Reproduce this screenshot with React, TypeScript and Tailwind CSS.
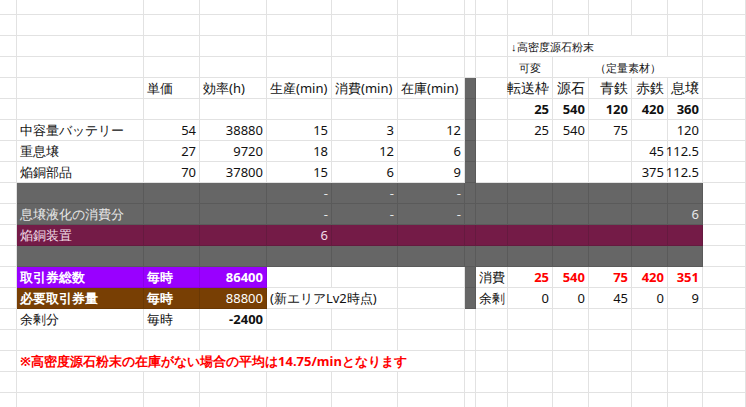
import React from "react";

const NCOL = 15;

type Cell = { c: number; span?: number; t?: string; cls?: string };
type Row = { h: string; bg?: { from: number; to: number; cls: string }; cells?: Cell[]; darkCol?: boolean };

const dark = "bg-[#666666] text-[#e8e8e8] border-[#5a5a5a]";
const maroon = "bg-[#741b47] text-[#f1dce6] border-[#651a3f]";
const R = "justify-end";
const H = `${R} text-[14px]`;
const RED = `${R} font-bold text-[#ff0000]`;

const spanCls: Record<number, string> = { 1: "col-span-1", 2: "col-span-2", 4: "col-span-4", 6: "col-span-6" };

const rows: Row[] = [
  { h: "h-[15px]" },
  { h: "h-[21px]" },
  { h: "h-[21px]", cells: [{ c: 9, span: 4, t: "↓高密度源石粉末", cls: "text-[11px]" }] },
  { h: "h-[21px]", cells: [{ c: 9, t: "可変", cls: "justify-center text-[11px]" }, { c: 10, span: 4, t: "（定量素材）", cls: "justify-center text-[11px]" }] },
  {
    h: "h-[21px]", darkCol: true, cells: [
      { c: 2, t: "単価" }, { c: 3, t: "効率(h)" }, { c: 4, t: "生産(min)" }, { c: 5, t: "消費(min)" }, { c: 6, t: "在庫(min)" },
      { c: 9, t: "転送枠", cls: H }, { c: 10, t: "源石", cls: H }, { c: 11, t: "青鉄", cls: H },
      { c: 12, t: "赤鉄", cls: H }, { c: 13, t: "息壌", cls: H },
    ],
  },
  {
    h: "h-[21px]", darkCol: true, cells: [
      { c: 9, t: "25", cls: `${R} font-bold` }, { c: 10, t: "540", cls: `${R} font-bold` }, { c: 11, t: "120", cls: `${R} font-bold` },
      { c: 12, t: "420", cls: `${R} font-bold` }, { c: 13, t: "360", cls: `${R} font-bold` },
    ],
  },
  {
    h: "h-[21px]", darkCol: true, cells: [
      { c: 1, t: "中容量バッテリー" }, { c: 2, t: "54", cls: R }, { c: 3, t: "38880", cls: R }, { c: 4, t: "15", cls: R }, { c: 5, t: "3", cls: R }, { c: 6, t: "12", cls: R },
      { c: 9, t: "25", cls: R }, { c: 10, t: "540", cls: R }, { c: 11, t: "75", cls: R }, { c: 13, t: "120", cls: R },
    ],
  },
  {
    h: "h-[21px]", darkCol: true, cells: [
      { c: 1, t: "重息壌" }, { c: 2, t: "27", cls: R }, { c: 3, t: "9720", cls: R }, { c: 4, t: "18", cls: R }, { c: 5, t: "12", cls: R }, { c: 6, t: "6", cls: R },
      { c: 12, t: "45", cls: R }, { c: 13, t: "112.5", cls: R },
    ],
  },
  {
    h: "h-[21px]", darkCol: true, cells: [
      { c: 1, t: "焔銅部品" }, { c: 2, t: "70", cls: R }, { c: 3, t: "37800", cls: R }, { c: 4, t: "15", cls: R }, { c: 5, t: "6", cls: R }, { c: 6, t: "9", cls: R },
      { c: 12, t: "375", cls: R }, { c: 13, t: "112.5", cls: R },
    ],
  },
  { h: "h-[21px]", bg: { from: 1, to: 13, cls: dark }, cells: [{ c: 4, t: "-", cls: R }, { c: 5, t: "-", cls: R }, { c: 6, t: "-", cls: R }] },
  {
    h: "h-[21px]", bg: { from: 1, to: 13, cls: dark }, cells: [
      { c: 1, t: "息壌液化の消費分" }, { c: 4, t: "-", cls: R }, { c: 5, t: "-", cls: R }, { c: 6, t: "-", cls: R }, { c: 13, t: "6", cls: R },
    ],
  },
  { h: "h-[21px]", bg: { from: 1, to: 13, cls: maroon }, cells: [{ c: 1, t: "焔銅装置" }, { c: 4, t: "6", cls: R }] },
  { h: "h-[21px]", bg: { from: 1, to: 13, cls: dark } },
  {
    h: "h-[21px]", darkCol: true, bg: { from: 1, to: 3, cls: "bg-[#9900ff] text-white border-[#8a00e6]" }, cells: [
      { c: 1, t: "取引券総数", cls: "font-bold" }, { c: 2, t: "毎時", cls: "font-bold" }, { c: 3, t: "86400", cls: `${R} font-bold` },
      { c: 8, t: "消費" },
      { c: 9, t: "25", cls: RED }, { c: 10, t: "540", cls: RED }, { c: 11, t: "75", cls: RED }, { c: 12, t: "420", cls: RED }, { c: 13, t: "351", cls: RED },
    ],
  },
  {
    h: "h-[21px]", darkCol: true, bg: { from: 1, to: 3, cls: "bg-[#783f04] text-white border-[#6a3804]" }, cells: [
      { c: 1, t: "必要取引券量", cls: "font-bold" }, { c: 2, t: "毎時", cls: "font-bold" }, { c: 3, t: "88800", cls: R },
      { c: 4, span: 2, t: "(新エリアLv2時点)" },
      { c: 8, t: "余剰" }, { c: 9, t: "0", cls: R }, { c: 10, t: "0", cls: R }, { c: 11, t: "45", cls: R }, { c: 12, t: "0", cls: R }, { c: 13, t: "9", cls: R },
    ],
  },
  { h: "h-[21px]", cells: [{ c: 1, t: "余剰分" }, { c: 2, t: "毎時" }, { c: 3, t: "-2400", cls: `${R} font-bold` }] },
  { h: "h-[21px]" },
  { h: "h-[21px]", cells: [{ c: 1, span: 6, t: "※高密度源石粉末の在庫がない場合の平均は14.75/minとなります", cls: "font-bold text-[#ff0000]" }] },
  { h: "h-[21px]" },
  { h: "h-[21px]" },
];

function SheetRow({ row }: { row: Row }) {
  const out: React.ReactNode[] = [];
  let c = 0;
  while (c < NCOL) {
    const cell = row.cells?.find((x) => x.c === c);
    const span = cell?.span ?? 1;
    let bgCls = "bg-white text-[#111] border-[#e2e2e2]";
    if (row.bg && c >= row.bg.from && c <= row.bg.to) bgCls = row.bg.cls;
    if (row.darkCol && c === 7) bgCls = dark;
    out.push(
      <div
        key={c}
        className={`flex items-center overflow-visible whitespace-nowrap border-r border-b px-[3px] ${spanCls[span]} ${bgCls} ${cell?.cls ?? ""}`}
      >
        {cell?.t}
      </div>
    );
    c += span;
  }
  return (
    <div className={`grid grid-cols-[17px_127px_56px_67px_65px_66px_67px_11px_32px_45px_36px_43px_36px_35px_43px] ${row.h}`}>
      {out}
    </div>
  );
}

export default function App() {
  return (
    <div className="w-[746px] h-[407px] overflow-hidden bg-white text-[13px] leading-none font-['Liberation_Sans','Noto_Sans_CJK_JP',sans-serif]">
      {rows.map((r, i) => (
        <SheetRow key={i} row={r} />
      ))}
    </div>
  );
}
